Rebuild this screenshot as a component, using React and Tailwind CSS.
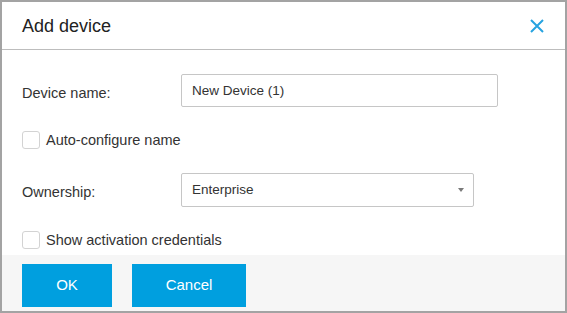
import React, { useState } from 'react';

const Checkbox = ({ label, checked, onChange }) => (
  <label className="h-[18px] flex items-center gap-[6px] cursor-pointer select-none">
    <span
      onClick={onChange}
      className="w-[18px] h-[18px] border border-[#d3d3d3] rounded-[3px] bg-white flex items-center justify-center"
    >
      {checked && <span className="text-[#009fe0] text-[12px]">✓</span>}
    </span>
    <span className="text-[14.5px] leading-[18px] text-[#333]">{label}</span>
  </label>
);

const AddDevice = () => {
  const [name, setName] = useState('New Device (1)');
  const [autoName, setAutoName] = useState(false);
  const [showCreds, setShowCreds] = useState(false);

  return (
    <div className="w-[567px] h-[313px] bg-white border-2 border-[#a3a3a3] flex flex-col font-['Liberation_Sans',Arial,sans-serif] overflow-hidden">
      {/* Header */}
      <div className="h-[48px] shrink-0 border-b border-[#bdbdbd] pl-[20px] pr-[21px] flex items-center justify-between">
        <h1 className="text-[18px] leading-[24px] text-[#222]">Add device</h1>
        <button className="w-[14px] h-[14px] flex items-center justify-center">
          <svg width="14" height="14" viewBox="0 0 14 14">
            <path d="M1 1 L13 13 M13 1 L1 13" stroke="#27a3e0" strokeWidth="2" />
          </svg>
        </button>
      </div>

      {/* Body */}
      <div className="px-[20px] pt-[24px]">
        <div className="flex items-center">
          <span className="w-[159px] mt-[6px] text-[14.5px] text-[#333]">Device name:</span>
          <input
            value={name}
            onChange={(e) => setName(e.target.value)}
            className="w-[317px] h-[33px] border border-[#c6c6c6] rounded-[2px] px-[10px] text-[13.5px] text-[#333] outline-none"
          />
        </div>

        <div className="mt-[24px]">
          <Checkbox label="Auto-configure name" checked={autoName} onChange={() => setAutoName(!autoName)} />
        </div>

        <div className="flex items-center mt-[24px]">
          <span className="w-[159px] mt-[5px] text-[14.5px] text-[#333]">Ownership:</span>
          <div className="w-[293px] h-[34px] border border-[#c6c6c6] rounded-[2px] px-[10px] flex items-center justify-between">
            <span className="text-[13.5px] text-[#333]">Enterprise</span>
            <svg width="6" height="4" viewBox="0 0 6 4" className="mr-[-1px]">
              <path d="M0 0 L6 0 L3 4 Z" fill="#7a7a7a" />
            </svg>
          </div>
        </div>

        <div className="mt-[24px]">
          <Checkbox label="Show activation credentials" checked={showCreds} onChange={() => setShowCreds(!showCreds)} />
        </div>
      </div>

      {/* Footer */}
      <div className="mt-[6px] flex-1 bg-[#f6f6f6] px-[20px] pt-[9px] flex gap-[20px]">
        <button className="w-[90px] h-[43px] bg-[#009fdf] text-white text-[15px]">OK</button>
        <button className="w-[114px] h-[43px] bg-[#009fdf] text-white text-[15px]">Cancel</button>
      </div>
    </div>
  );
};

export default function App() {
  return <AddDevice />;
}
